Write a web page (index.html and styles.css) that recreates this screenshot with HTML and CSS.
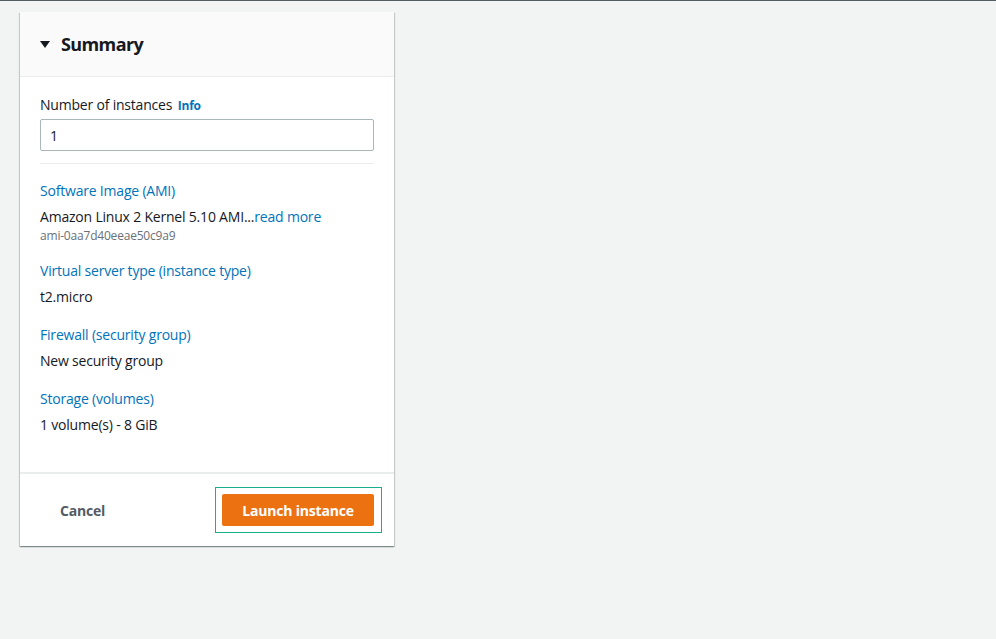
FILE: index.html
```html
<!DOCTYPE html>
<html lang="en">

<head>
    <meta charset="UTF-8">
    <meta name="viewport" content="width=device-width, initial-scale=1.0">
    <title>Launch an instance - Summary</title>
    <link rel="stylesheet" href="styles.css">
</head>

<body>
    <div class="topbar"></div>
    <div class="page">
        <div class="summary-panel">
            <div class="panel-header">
                <span class="caret"></span>
                <h2>Summary</h2>
            </div>
            <div class="panel-body">
                <div class="field">
                    <label for="instanceCount">Number of instances <a href="#" class="info-link">Info</a></label>
                    <input type="text" id="instanceCount" class="count-input" value="1">
                </div>
                <hr class="divider">
                <div class="section">
                    <a href="#" class="section-title">Software Image (AMI)</a>
                    <p class="section-value">Amazon Linux 2 Kernel 5.10 AMI...<a href="#">read more</a></p>
                    <p class="section-sub">ami-0aa7d40eeae50c9a9</p>
                </div>
                <div class="section">
                    <a href="#" class="section-title">Virtual server type (instance type)</a>
                    <p class="section-value">t2.micro</p>
                </div>
                <div class="section">
                    <a href="#" class="section-title">Firewall (security group)</a>
                    <p class="section-value">New security group</p>
                </div>
                <div class="section">
                    <a href="#" class="section-title">Storage (volumes)</a>
                    <p class="section-value">1 volume(s) - 8 GiB</p>
                </div>
            </div>
            <div class="panel-footer">
                <button class="btn-cancel">Cancel</button>
                <span class="focus-ring">
                    <button class="btn-launch">Launch instance</button>
                </span>
            </div>
        </div>
    </div>
</body>

</html>
```

FILE: styles.css
```css
body {
    font-family: "Open Sans", "Noto Sans", Arial, sans-serif;
    background-color: #f2f3f3;
    color: #16191f;
    margin: 0;
    padding: 0;
    font-size: 14px;
    line-height: 22px;
    letter-spacing: -0.2px;
}

a {
    color: #0073bb;
    text-decoration: none;
}

.topbar {
    height: 1px;
    background-color: #545b64;
}

.page {
    padding: 11px 20px 20px 20px;
}

.summary-panel {
    width: 374px;
    background-color: white;
    box-shadow: 0 1px 1px 0 rgba(0, 28, 36, 0.3), 1px 1px 1px 0 rgba(0, 28, 36, 0.15), -1px 1px 1px 0 rgba(0, 28, 36, 0.15);
}

.panel-header {
    display: flex;
    align-items: center;
    padding: 20px 20px 20px 20px;
    background-color: #fafafa;
    border-bottom: 1px solid #eaeded;
}

.caret {
    width: 0;
    height: 0;
    border-left: 5px solid transparent;
    border-right: 5px solid transparent;
    border-top: 7px solid #16191f;
    margin-right: 11px;
}

.panel-header h2 {
    margin: 0;
    font-size: 18px;
    line-height: 24px;
    font-weight: 700;
    letter-spacing: -0.6px;
}

.panel-body {
    padding: 17px 20px 36px 20px;
}

.field label {
    display: block;
    margin-bottom: 2px;
}

.info-link {
    font-size: 12px;
    font-weight: 700;
    margin-left: 2px;
}

.count-input {
    box-sizing: border-box;
    width: 100%;
    height: 32px;
    padding: 4px 9px;
    border: 1px solid #aab7b8;
    border-radius: 2px;
    font-family: inherit;
    font-size: 14px;
    color: #16191f;
}

.divider {
    border: none;
    border-top: 1px solid #eaeded;
    margin: 12px 0 16px 0;
}

.section {
    margin-bottom: 16px;
}

.section:last-child {
    margin-bottom: 0;
}

.section-title {
    display: block;
}

.section-value {
    margin: 4px 0 0 0;
}

.section-sub {
    margin: 0;
    font-size: 12px;
    line-height: 16px;
    color: #687078;
}

.panel-footer {
    display: flex;
    justify-content: space-between;
    align-items: center;
    padding: 13px 12px 13px 20px;
    border-top: 2px solid #eaeded;
}

.btn-cancel {
    background: none;
    border: none;
    padding: 4px 20px;
    font-family: inherit;
    font-size: 14px;
    font-weight: 700;
    letter-spacing: inherit;
    color: #545b64;
    cursor: pointer;
}

.focus-ring {
    display: flex;
    padding: 6px 7px 6px 6px;
    border: 1px solid #16b08f;
}

.btn-launch {
    width: 152px;
    height: 32px;
    background-color: #ec7211;
    border: none;
    border-radius: 2px;
    color: white;
    font-family: inherit;
    font-size: 14px;
    font-weight: 700;
    letter-spacing: inherit;
    cursor: pointer;
}
```
